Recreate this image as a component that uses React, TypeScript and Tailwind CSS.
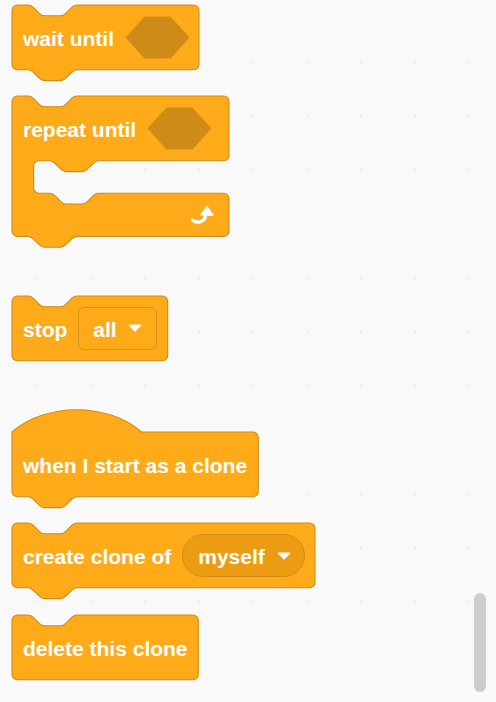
import type { ReactNode } from 'react'

const S = 1.35
const FILL = '#ffab19'
const EDGE = '#cf8b17'

const nR = 'c2,0 3,1 4,2 l4,4 c1,1 2,2 4,2 h12 c2,0 3,-1 4,-2 l4,-4 c1,-1 2,-2 4,-2'
const nL = 'c-2,0 -3,1 -4,2 l-4,4 c-1,1 -2,2 -4,2 h-12 c-2,0 -3,-1 -4,-2 l-4,-4 c-1,-1 -2,-2 -4,-2'

type Kind = 'stack' | 'cap' | 'hat' | 'c'

function shape(kind: Kind, w: number, h: number) {
  if (kind === 'c') {
    return `M0,4 a4,4 0 0,1 4,-4 H12 ${nR} H${w - 4} a4,4 0 0,1 4,4 V44 a4,4 0 0,1 -4,4 H64 ${nL} H20 a4,4 0 0,0 -4,4 V68 a4,4 0 0,0 4,4 H28 ${nR} H${w - 4} a4,4 0 0,1 4,4 V${h - 4} a4,4 0 0,1 -4,4 H48 ${nL} H4 a4,4 0 0,1 -4,-4 Z`
  }
  const top = kind === 'hat' ? 'M0,0 c25,-22 71,-22 96,0' : `M0,4 a4,4 0 0,1 4,-4 H12 ${nR}`
  const bottom = kind === 'cap' ? 'H4 a4,4 0 0,1 -4,-4 Z' : `H48 ${nL} H4 a4,4 0 0,1 -4,-4 Z`
  return `${top} H${w - 4} a4,4 0 0,1 4,4 V${h - 4} a4,4 0 0,1 -4,4 ${bottom}`
}

function Block({
  kind,
  w,
  h = 64.8,
  className,
  children,
}: {
  kind: Kind
  w: number
  h?: number
  className: string
  children: ReactNode
}) {
  return (
    <div className={`relative shrink-0 ${className}`}>
      <svg
        className="absolute left-0 top-0 overflow-visible"
        width={w}
        height={h}
        viewBox={`0 0 ${w / S} ${h / S}`}
      >
        <path d={shape(kind, w / S, h / S)} fill={FILL} stroke={EDGE} strokeWidth={0.8} />
      </svg>
      <div className="relative">{children}</div>
    </div>
  )
}

function Label({ children }: { children: ReactNode }) {
  return <span className="whitespace-nowrap pt-[2px] text-[21px] font-bold leading-none text-white">{children}</span>
}

function Hexagon() {
  return (
    <svg width="65" height="43" viewBox="0 0 65 43" className="shrink-0">
      <path d="M0.5 21.5 L19.5 0.5 H45.5 L64.5 21.5 L45.5 42.5 H19.5 Z" fill="#cf8b17" />
    </svg>
  )
}

function Caret() {
  return (
    <svg width="14" height="8" viewBox="0 0 14 8" className="shrink-0">
      <path d="M1.5 1.2 H12.5 L7 6.8 Z" fill="#fff" stroke="#fff" strokeWidth="1.6" strokeLinejoin="round" />
    </svg>
  )
}

function RepeatIcon() {
  return (
    <svg width="25" height="20" viewBox="0 0 25 20">
      <path d="M2.4 15.2 C6.8 18.6 15 17.8 16 9" fill="none" stroke="#fff" strokeWidth="3.4" strokeLinecap="round" />
      <path d="M11 9.8 L17 1.6 L22.8 10.2 Z" fill="#fff" stroke="#fff" strokeWidth="1.4" strokeLinejoin="round" />
    </svg>
  )
}

export default function App() {
  return (
    <div className="relative h-[702px] w-[496px] overflow-hidden bg-[#f9f9f9] bg-[radial-gradient(circle,#ececec_0.8px,transparent_1.3px)] bg-[length:54px_54px] bg-[position:10px_-19px] font-['Liberation_Sans',Arial,sans-serif]">
      <div className="flex flex-col items-start pl-[12px] pt-[5px]">
        <Block kind="stack" w={187} className="h-[64.8px] w-[187px]">
          <div className="flex h-[64.8px] items-center gap-[11px] pl-[11px]">
            <Label>wait until</Label>
            <Hexagon />
          </div>
        </Block>

        <Block kind="c" w={217} h={140.4} className="mt-[26.2px] h-[140.4px] w-[217px]">
          <div className="flex h-[64.8px] items-center gap-[11px] pl-[11px]">
            <Label>repeat until</Label>
            <Hexagon />
          </div>
          <div className="h-[32.4px]" />
          <div className="flex h-[43.2px] items-center justify-end pr-[14px] pt-[1px]">
            <RepeatIcon />
          </div>
        </Block>

        <Block kind="cap" w={155.7} className="mt-[59.6px] h-[64.8px] w-[155.7px]">
          <div className="flex h-[64.8px] items-center gap-[11px] pl-[11px]">
            <Label>stop</Label>
            <div className="flex h-[43.4px] w-[79px] items-center gap-[11px] rounded-[6px] border border-[#d8921a] pl-[14px]">
              <Label>all</Label>
              <Caret />
            </div>
          </div>
        </Block>

        <Block kind="hat" w={246.3} className="mt-[70.9px] h-[64.8px] w-[246.3px]">
          <div className="flex h-[64.8px] items-center pl-[11px]">
            <Label>when I start as a clone</Label>
          </div>
        </Block>

        <Block kind="stack" w={303} className="mt-[26.8px] h-[64.8px] w-[303px]">
          <div className="flex h-[64.8px] items-center gap-[11px] pl-[11px]">
            <Label>create clone of</Label>
            <div className="flex h-[43.6px] w-[122.6px] items-center gap-[12px] rounded-full border border-[#cf8b17] bg-[#ec9c13] pl-[15px]">
              <Label>myself</Label>
              <Caret />
            </div>
          </div>
        </Block>

        <Block kind="cap" w={186.3} className="mt-[26.9px] h-[64.8px] w-[186.3px]">
          <div className="flex h-[64.8px] items-center pl-[11px]">
            <Label>delete this clone</Label>
          </div>
        </Block>
      </div>

      <div className="absolute left-[474px] top-[593px] h-[99px] w-[12px] rounded-full bg-[#cdcdcd]" />
    </div>
  )
}
